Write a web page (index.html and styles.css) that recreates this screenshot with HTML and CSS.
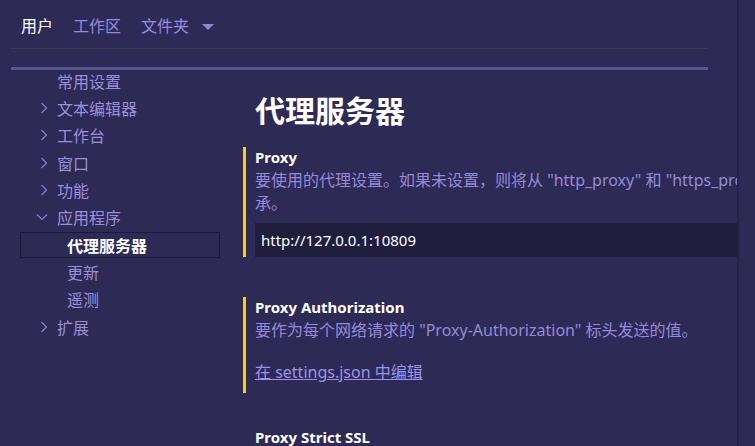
FILE: index.html
```html
<!DOCTYPE html>
<html lang="zh-CN">
<head>
<meta charset="utf-8">
<title>设置</title>
<link rel="stylesheet" href="styles.css">
</head>
<body>
<div class="app">
  <div class="editor">
    <nav class="tabs">
      <span class="tab active">用户</span>
      <span class="tab">工作区</span>
      <span class="tab">文件夹</span>
      <svg class="caret" width="12" height="6" viewBox="0 0 12 6"><path d="M0 0H12L6 6Z" fill="#8f85d6"/></svg>
    </nav>
    <div class="rule-thin"></div>
    <div class="rule-thick"></div>
    <div class="body">
      <ul class="tree">
        <li class="row"><span class="chev"></span><span class="label">常用设置</span></li>
        <li class="row"><span class="chev"><svg width="8" height="12" viewBox="0 0 8 12"><path d="M1.5 1L6.5 6L1.5 11" fill="none" stroke="#8a80cc" stroke-width="1.2"/></svg></span><span class="label">文本编辑器</span></li>
        <li class="row"><span class="chev"><svg width="8" height="12" viewBox="0 0 8 12"><path d="M1.5 1L6.5 6L1.5 11" fill="none" stroke="#8a80cc" stroke-width="1.2"/></svg></span><span class="label">工作台</span></li>
        <li class="row"><span class="chev"><svg width="8" height="12" viewBox="0 0 8 12"><path d="M1.5 1L6.5 6L1.5 11" fill="none" stroke="#8a80cc" stroke-width="1.2"/></svg></span><span class="label">窗口</span></li>
        <li class="row"><span class="chev"><svg width="8" height="12" viewBox="0 0 8 12"><path d="M1.5 1L6.5 6L1.5 11" fill="none" stroke="#8a80cc" stroke-width="1.2"/></svg></span><span class="label">功能</span></li>
        <li class="row"><span class="chev"><svg class="down" width="12" height="8" viewBox="0 0 12 8"><path d="M1 1.5L6 6.5L11 1.5" fill="none" stroke="#8a80cc" stroke-width="1.2"/></svg></span><span class="label">应用程序</span></li>
        <li class="row sub selected"><span class="label">代理服务器</span></li>
        <li class="row sub"><span class="label">更新</span></li>
        <li class="row sub"><span class="label">遥测</span></li>
        <li class="row"><span class="chev"><svg width="8" height="12" viewBox="0 0 8 12"><path d="M1.5 1L6.5 6L1.5 11" fill="none" stroke="#8a80cc" stroke-width="1.2"/></svg></span><span class="label">扩展</span></li>
      </ul>
      <main class="content">
        <h1 class="title">代理服务器</h1>
        <section class="setting modified">
          <div class="name">Proxy</div>
          <p class="desc">要使用的代理设置。如果未设置，则将从 "http_proxy" 和 "https_proxy" 环境变量中继承。</p>
          <div class="input">http://127.0.0.1:10809</div>
        </section>
        <section class="setting modified second">
          <div class="name">Proxy Authorization</div>
          <p class="desc">要作为每个网络请求的 "Proxy-Authorization" 标头发送的值。</p>
          <a class="edit-link" href="#">在 settings.json 中编辑</a>
        </section>
        <section class="setting third">
          <div class="name">Proxy Strict SSL</div>
        </section>
      </main>
    </div>
  </div>
  <div class="gutter"></div>
</div>
</body>
</html>
```
FILE: styles.css
```css
html, body {
  margin: 0;
  padding: 0;
  background: #2d2a55;
  height: 100%;
  overflow: hidden;
}
body {
  font-family: "Noto Sans", "Noto Sans CJK SC", sans-serif;
  color: #9a90dc;
}
.app {
  display: flex;
  height: 446px;
}
.editor {
  width: 737px;
  overflow: hidden;
  border-right: 2px solid #252248;
  flex: none;
}
.gutter {
  flex: 1;
}
.tabs {
  display: flex;
  align-items: center;
  height: 48px;
  padding-left: 21px;
  box-sizing: border-box;
  padding-top: 4px;
  gap: 20px;
  font-size: 16px;
}
.tab {
  color: #958be0;
  line-height: 20px;
}
.tab.active {
  color: #ffffff;
}
.caret {
  margin-left: -7px;
  margin-top: 1px;
}
.rule-thin {
  margin-left: 11px;
  width: 697px;
  height: 1px;
  background: #3c3a4a;
}
.rule-thick {
  margin-left: 11px;
  width: 697px;
  height: 3px;
  margin-top: 18px;
  background: #5a5596;
}
.body {
  display: flex;
}
.tree {
  list-style: none;
  margin: -3px 0 0 0;
  padding: 0;
  width: 243px;
  flex: none;
}
.row {
  height: 27.33px;
  display: flex;
  align-items: center;
  padding-left: 37px;
  font-size: 16px;
  color: #9a90d8;
}
.chev {
  width: 20px;
  box-sizing: border-box;
  padding-left: 3px;
  display: flex;
  align-items: center;
  justify-content: flex-start;
}
.chev .down {
  margin-left: -4px;
}
.row.sub {
  padding-left: 67px;
}
.row.selected {
  margin-left: 20px;
  width: 200px;
  padding-left: 46px;
  box-sizing: border-box;
  border: 1px solid #1b1a38;
  height: 26px;
  margin-top: 0.66px;
  margin-bottom: 0.66px;
  color: #ffffff;
  font-weight: 700;
}
.content {
  flex: 1;
  min-width: 0;
}
.title {
  margin: 21px 0 0 12px;
  font-size: 30px;
  line-height: 40px;
  font-weight: 700;
  color: #ffffff;
}
.setting {
  border-left: 3px solid transparent;
  padding-left: 9px;
  white-space: nowrap;
}
.setting.modified {
  border-left-color: #f5d10c;
}
.setting:first-of-type {
  margin-top: 16px;
}
.name {
  font-weight: 700;
  color: #ffffff;
  font-size: 15px;
  line-height: 20px;
}
.desc {
  margin: 2px 0 0 0;
  font-size: 16px;
  line-height: 23px;
  color: #948ad8;
  white-space: normal;
  width: 626px;
}
.input {
  margin-top: 8px;
  height: 34px;
  line-height: 34px;
  background: #201e3d;
  color: #ffffff;
  font-size: 15px;
  padding-left: 6px;
  width: 600px;
}
.second {
  margin-top: 40px;
}
.edit-link {
  display: inline-block;
  margin-top: 19px;
  color: #9d93e6;
  font-size: 16px;
  line-height: 22px;
  margin-bottom: 10px;
}
.third {
  margin-top: 34px;
}
```
